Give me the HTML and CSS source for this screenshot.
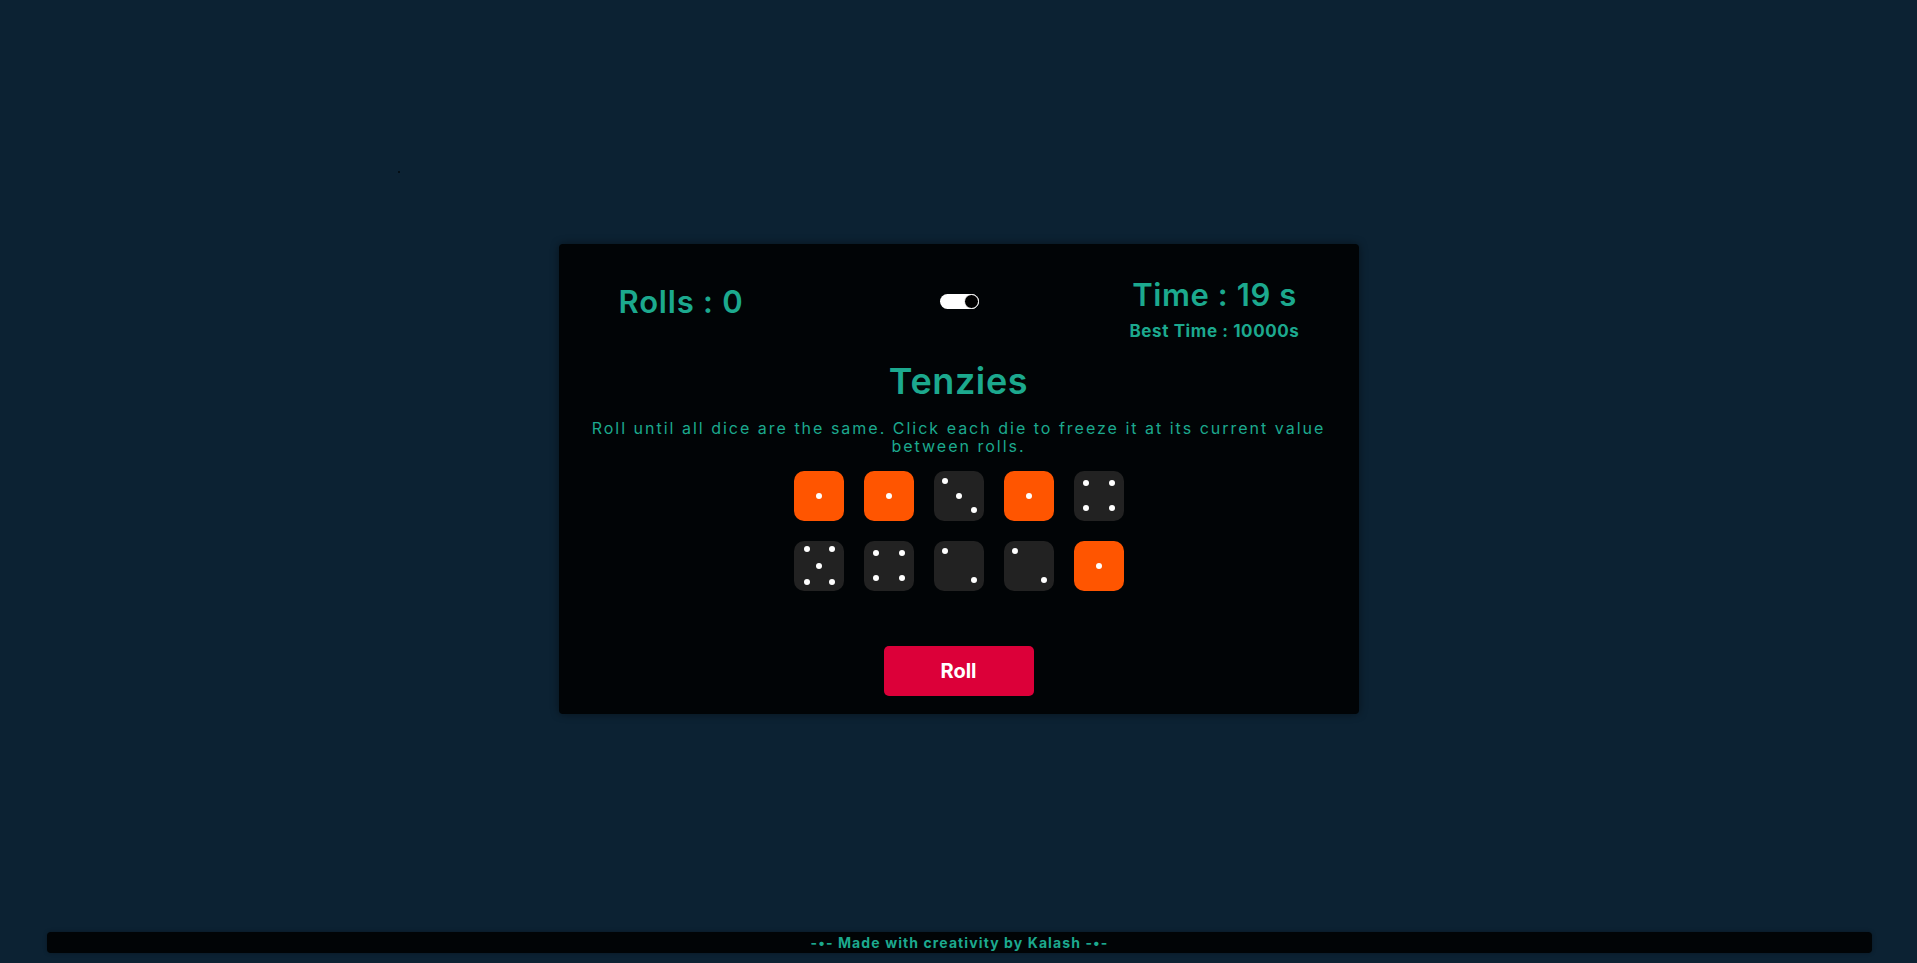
FILE: index.html
```html
<!DOCTYPE html>
<html lang="en">
<head>
<meta charset="utf-8">
<title>Tenzies</title>
<link rel="stylesheet" href="styles.css">
</head>
<body>
<span class="speck"></span>
<main class="stage">
  <section class="card">
    <header class="stats">
      <div class="rolls">Rolls : 0</div>
      <div class="toggle"><span class="knob"></span></div>
      <div class="times">
        <div class="time">Time : 19 s</div>
        <div class="best">Best Time : 10000s</div>
      </div>
    </header>
    <h1 class="title">Tenzies</h1>
    <p class="instructions">Roll until all dice are the same. Click each die to freeze it at its current value between rolls.</p>
    <div class="dice">
      <div class="die held face-1"><span class="pip"></span></div>
      <div class="die held face-1"><span class="pip"></span></div>
      <div class="die face-3"><span class="pip"></span><span class="pip mid"></span><span class="pip end"></span></div>
      <div class="die held face-1"><span class="pip"></span></div>
      <div class="die face-4"><div class="col"><span class="pip"></span><span class="pip"></span></div><div class="col"><span class="pip"></span><span class="pip"></span></div></div>
      <div class="die face-5"><div class="col"><span class="pip"></span><span class="pip"></span></div><div class="col center"><span class="pip"></span></div><div class="col"><span class="pip"></span><span class="pip"></span></div></div>
      <div class="die face-4"><div class="col"><span class="pip"></span><span class="pip"></span></div><div class="col"><span class="pip"></span><span class="pip"></span></div></div>
      <div class="die face-2"><span class="pip"></span><span class="pip end"></span></div>
      <div class="die face-2"><span class="pip"></span><span class="pip end"></span></div>
      <div class="die held face-1"><span class="pip"></span></div>
    </div>
    <button class="roll">Roll</button>
  </section>
</main>
<footer class="footer">-•- Made with creativity by Kalash -•-</footer>
</body>
</html>
```
FILE: styles.css
```css
* { box-sizing: border-box; }

html, body { height: 100%; }

body {
  margin: 0;
  background: #0c2233;
  font-family: Inter, "Noto Sans", sans-serif;
  color: #1ca98e;
  display: flex;
  flex-direction: column;
  position: relative;
}

.speck {
  position: absolute;
  left: 398px;
  top: 171px;
  width: 2px;
  height: 2px;
  border-radius: 50%;
  background: #02080c;
}

.stage {
  flex: 1;
  display: flex;
  justify-content: center;
  align-items: flex-start;
  padding-top: 244px;
}

.card {
  width: 800px;
  background: #010406;
  border-radius: 4px;
  box-shadow: 0 0 8px rgba(0, 0, 0, 0.45);
  padding: 35px 20px 18px;
  display: flex;
  flex-direction: column;
  align-items: center;
}

.stats {
  width: 100%;
  display: grid;
  grid-template-columns: 1fr auto 1fr;
  align-items: start;
  padding: 0 39px 0 40px;
}

.rolls {
  justify-self: start;
  margin-top: 7px;
  font-size: 31px;
  line-height: 31px;
  font-weight: 600;
  letter-spacing: 0.8px;
}

.toggle {
  margin-top: 15px;
  width: 39px;
  height: 15px;
  border-radius: 8px;
  background: #ffffff;
  display: flex;
  justify-content: flex-end;
}

.knob {
  width: 15px;
  height: 15px;
  border-radius: 50%;
  background: #000000;
  border: 1.5px solid #ffffff;
}

.times {
  justify-self: end;
  display: flex;
  flex-direction: column;
  align-items: center;
}

.time {
  font-size: 31px;
  line-height: 31px;
  font-weight: 600;
  letter-spacing: 0.6px;
}

.best {
  margin-top: 13px;
  font-size: 17px;
  line-height: 17px;
  font-weight: 700;
  letter-spacing: 0.6px;
}

.title {
  margin: 23px 0 0;
  font-size: 36px;
  line-height: 36px;
  font-weight: 600;
  letter-spacing: 0.6px;
}

.instructions {
  margin: 20px 0 0;
  max-width: 780px;
  text-align: center;
  font-size: 16px;
  line-height: 18px;
  font-weight: 400;
  letter-spacing: 2px;
}

.dice {
  margin-top: 16px;
  display: grid;
  grid-template-columns: repeat(5, 50px);
  grid-auto-rows: 50px;
  gap: 20px;
}

.die {
  width: 50px;
  height: 50px;
  border-radius: 10px;
  background: #222222;
  display: flex;
}

.die.held { background: #ff5500; }

.pip {
  width: 6px;
  height: 6px;
  border-radius: 50%;
  background: #ffffff;
  flex: none;
}

.face-1 { justify-content: center; align-items: center; }

.face-2, .face-3 {
  justify-content: space-between;
  padding: 7px 7px 8px 8px;
}
.face-2 .end, .face-3 .end { align-self: flex-end; }
.face-3 .mid { align-self: center; }

.face-4 {
  justify-content: space-between;
  padding: 9px 9px 10px 9.5px;
}
.face-5 {
  justify-content: space-between;
  padding: 5px 9px 6px 10px;
}
.col {
  display: flex;
  flex-direction: column;
  justify-content: space-between;
}
.col.center { justify-content: center; }

.roll {
  margin-top: 55px;
  width: 150px;
  height: 50px;
  border: none;
  border-radius: 5px;
  background: #dc0039;
  color: #ffffff;
  font-family: Inter, "Noto Sans", sans-serif;
  font-size: 20px;
  font-weight: 700;
  cursor: pointer;
}

.footer {
  width: 1825px;
  margin: 0 auto 10px 47px;
  height: 21px;
  border-radius: 4px;
  background: #010406;
  box-shadow: 0 0 4px rgba(0, 0, 0, 0.3);
  text-align: center;
  font-size: 14px;
  line-height: 21px;
  font-weight: 700;
  letter-spacing: 1.1px;
}
```
